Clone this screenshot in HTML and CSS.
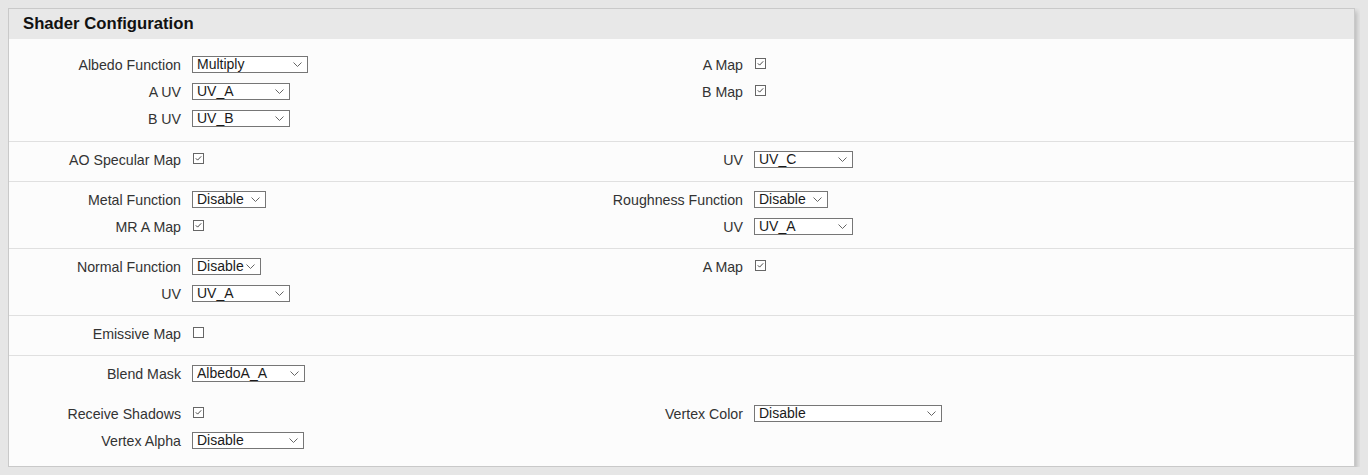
FILE: index.html
```html
<!DOCTYPE html>
<html>
  <head>
    <meta charset="utf-8" />
    <link rel="stylesheet" href="styles.css">
  </head>
  <body>
    <div class="panel">
      <div class="panel-head">Shader Configuration</div>

      <!-- Albedo -->
      <div class="group first">
        <div class="row">
          <label class="lbl">Albedo Function</label>
          <span class="select w-116"><select><option>Multiply</option></select><svg viewBox="0 0 9 5"><polyline points="0.5,0.5 4.5,4.5 8.5,0.5" /></svg></span>
          <label class="lbl">A Map</label>
          <span class="check"><svg viewBox="0 0 10 10"><polyline points="2,4.8 4,6.8 8,2.6" /></svg></span>
        </div>
        <div class="row">
          <label class="lbl">A UV</label>
          <span class="select w-98"><select><option>UV_A</option></select><svg viewBox="0 0 9 5"><polyline points="0.5,0.5 4.5,4.5 8.5,0.5" /></svg></span>
          <label class="lbl">B Map</label>
          <span class="check"><svg viewBox="0 0 10 10"><polyline points="2,4.8 4,6.8 8,2.6" /></svg></span>
        </div>
        <div class="row">
          <label class="lbl">B UV</label>
          <span class="select w-98"><select><option>UV_B</option></select><svg viewBox="0 0 9 5"><polyline points="0.5,0.5 4.5,4.5 8.5,0.5" /></svg></span>
        </div>
      </div>

      <!-- AO / Specular -->
      <div class="group">
        <div class="row">
          <label class="lbl">AO Specular Map</label>
          <span class="check"><svg viewBox="0 0 10 10"><polyline points="2,4.8 4,6.8 8,2.6" /></svg></span>
          <label class="lbl">UV</label>
          <span class="select w-99"><select><option>UV_C</option></select><svg viewBox="0 0 9 5"><polyline points="0.5,0.5 4.5,4.5 8.5,0.5" /></svg></span>
        </div>
      </div>

      <!-- Metal / Roughness -->
      <div class="group">
        <div class="row">
          <label class="lbl">Metal Function</label>
          <span class="select w-74"><select><option>Disable</option></select><svg viewBox="0 0 9 5"><polyline points="0.5,0.5 4.5,4.5 8.5,0.5" /></svg></span>
          <label class="lbl">Roughness Function</label>
          <span class="select w-74"><select><option>Disable</option></select><svg viewBox="0 0 9 5"><polyline points="0.5,0.5 4.5,4.5 8.5,0.5" /></svg></span>
        </div>
        <div class="row">
          <label class="lbl">MR A Map</label>
          <span class="check"><svg viewBox="0 0 10 10"><polyline points="2,4.8 4,6.8 8,2.6" /></svg></span>
          <label class="lbl">UV</label>
          <span class="select w-99"><select><option>UV_A</option></select><svg viewBox="0 0 9 5"><polyline points="0.5,0.5 4.5,4.5 8.5,0.5" /></svg></span>
        </div>
      </div>

      <!-- Normal -->
      <div class="group">
        <div class="row">
          <label class="lbl">Normal Function</label>
          <span class="select w-69"><select><option>Disable</option></select><svg viewBox="0 0 9 5"><polyline points="0.5,0.5 4.5,4.5 8.5,0.5" /></svg></span>
          <label class="lbl">A Map</label>
          <span class="check"><svg viewBox="0 0 10 10"><polyline points="2,4.8 4,6.8 8,2.6" /></svg></span>
        </div>
        <div class="row">
          <label class="lbl">UV</label>
          <span class="select w-98"><select><option>UV_A</option></select><svg viewBox="0 0 9 5"><polyline points="0.5,0.5 4.5,4.5 8.5,0.5" /></svg></span>
        </div>
      </div>

      <!-- Emissive -->
      <div class="group">
        <div class="row">
          <label class="lbl">Emissive Map</label>
          <span class="check"></span>
        </div>
      </div>

      <!-- Misc -->
      <div class="group last">
        <div class="row">
          <label class="lbl">Blend Mask</label>
          <span class="select w-113"><select><option>AlbedoA_A</option></select><svg viewBox="0 0 9 5"><polyline points="0.5,0.5 4.5,4.5 8.5,0.5" /></svg></span>
        </div>
        <div class="row spaced">
          <label class="lbl">Receive Shadows</label>
          <span class="check"><svg viewBox="0 0 10 10"><polyline points="2,4.8 4,6.8 8,2.6" /></svg></span>
          <label class="lbl">Vertex Color</label>
          <span class="select w-188"><select><option>Disable</option></select><svg viewBox="0 0 9 5"><polyline points="0.5,0.5 4.5,4.5 8.5,0.5" /></svg></span>
        </div>
        <div class="row">
          <label class="lbl">Vertex Alpha</label>
          <span class="select w-112"><select><option>Disable</option></select><svg viewBox="0 0 9 5"><polyline points="0.5,0.5 4.5,4.5 8.5,0.5" /></svg></span>
        </div>
      </div>
    </div>
  </body>
</html>
```

FILE: styles.css
```css
/* Page */
body {
  margin: 8px;
  background-color: #e6e6e6;
  font-family: "Liberation Sans", Arial, sans-serif;
  color: #333333;
}

/* Panel */
.panel {
  width: 1347px;
  box-sizing: border-box;
  border: 1px solid #c9c9c9;
  background-color: #fcfcfc;
  box-shadow: 2px 3px 5px rgba(0, 0, 0, 0.2);
}

.panel-head {
  height: 30px;
  line-height: 30px;
  padding-left: 14px;
  background-color: #e8e8e8;
  font-size: 16.7px;
  font-weight: bold;
  color: #111111;
}

/* Groups of rows, separated by a thin line */
.group {
  padding: 8px 0 4px;
  border-bottom: 1px solid #e0e0e0;
}

.group.first {
  padding-top: 16px;
  padding-bottom: 5px;
}

.group.last {
  border-bottom: none;
  padding-bottom: 8px;
}

.row {
  display: grid;
  grid-template-columns: 172px 368px 172px 1fr;
  column-gap: 11px;
  align-items: center;
  height: 17px;
  margin-bottom: 10px;
}

/* extra space above the shadows row (margins collapse, so the full gap) */
.row.spaced {
  margin-top: 23px;
}

.lbl {
  text-align: right;
  font-size: 14.2px;
  line-height: 17px;
  padding-top: 2px;
  color: #333333;
  white-space: nowrap;
}

/* Select boxes */
.select {
  position: relative;
  display: block;
  height: 17px;
}

.select select {
  appearance: none;
  -webkit-appearance: none;
  display: block;
  width: 100%;
  height: 17px;
  box-sizing: border-box;
  margin: 0;
  padding: 0 0 0 4px;
  border: 1px solid #767676;
  border-radius: 0;
  background-color: #ffffff;
  font-family: "Liberation Sans", Arial, sans-serif;
  font-size: 14px;
  line-height: 15px;
  color: #1a1a1a;
  outline: none;
}

.select svg {
  position: absolute;
  right: 6px;
  top: 6px;
  width: 9px;
  height: 5px;
  fill: none;
  stroke: #666666;
  stroke-width: 1;
  pointer-events: none;
}

.w-69 { width: 69px; }
.w-74 { width: 74px; }
.w-98 { width: 98px; }
.w-99 { width: 99px; }
.w-112 { width: 112px; }
.w-113 { width: 113px; }
.w-116 { width: 116px; }
.w-188 { width: 188px; }

/* Check boxes */
.check {
  display: block;
  width: 9px;
  height: 9px;
  margin-left: 1px;
  margin-top: -3px;
  border: 1px solid #666666;
  background-color: #ffffff;
}

.check svg {
  display: block;
  width: 9px;
  height: 9px;
  fill: none;
  stroke: #333333;
  stroke-width: 1;
}
```
